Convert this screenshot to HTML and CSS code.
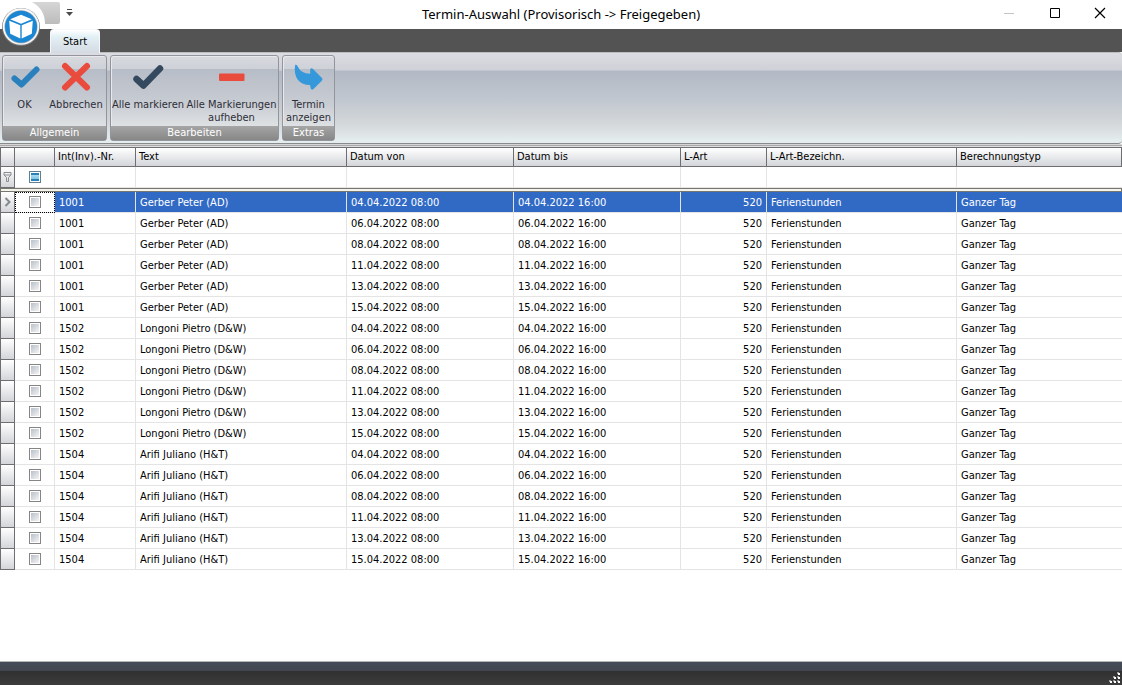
FILE: index.html
```html
<!DOCTYPE html>
<html lang="de">
<head>
<meta charset="utf-8">
<title>Termin-Auswahl</title>
<link rel="stylesheet" href="styles.css">
</head>
<body>
<div class="window">
  <header class="titlebar">
    <div class="quick-access">
      <svg class="quick-shape" width="34" height="26" viewBox="0 0 34 26" aria-hidden="true"><defs><linearGradient id="quick" x1="0" y1="0" x2="0" y2="1"><stop offset="0" stop-color="#d6d6d6"/><stop offset="1" stop-color="#bcbcbc"/></linearGradient></defs><path d="M6 2H32Q34 2 34 4V22Q34 24 32 24H19Q19 9 6 2Z" fill="url(#quick)"/></svg>
      <button class="quick-menu" type="button" aria-label="Schnellzugriff anpassen"><svg width="7" height="7" viewBox="0 0 7 7"><path d="M1 0H6V1H1ZM0 3H7L3.5 7Z" fill="#4a4a4a"/></svg></button>
    </div>
    <h1 class="title">Termin-Auswahl (Provisorisch -&gt; Freigegeben)</h1>
    <div class="window-controls">
      <button type="button" aria-label="Minimieren" disabled><svg width="12" height="12" viewBox="0 0 12 12"><path d="M1 6.5H11" stroke="#c4c4c4"/></svg></button>
      <button type="button" aria-label="Maximieren"><svg width="12" height="12" viewBox="0 0 12 12"><path d="M1.5 1.5H10.500V10.500H1.500Z" fill="none" stroke="#000"/></svg></button>
      <button type="button" aria-label="Schliessen"><svg width="12" height="12" viewBox="0 0 12 12"><path d="M1 1L11 11M11 1L1 11" stroke="#000" stroke-width="1.200"/></svg></button>
    </div>
  </header>
  <button class="orb" type="button" aria-label="Anwendungsmenü">
    <svg width="42" height="42" viewBox="0 0 42 42">
      <circle cx="21" cy="21" r="19" fill="#777"/>
      <circle cx="21" cy="20.500" r="18.300" fill="#fafafa"/>
      <circle cx="21" cy="20.800" r="16.600" fill="#b5b8ba"/>
      <circle cx="21" cy="20.800" r="16" fill="#1b87d3"/>
      <path d="M21 8.800L31.800 13.200L21 17.800L10.200 13.200ZM9.200 14.800L20.300 19.300V32.500L10.200 27.800ZM32.800 14.800L21.700 19.300V32.500L31.800 27.800Z" fill="#fff"/>
    </svg>
  </button>
  <nav class="tabs" role="tablist">
    <button class="tab" type="button" role="tab" aria-selected="true">Start</button>
  </nav>
  <section class="ribbon">
    <div class="group">
      <div class="group-items">
        <button class="tool tool-ok" type="button"><svg width="32" height="32" viewBox="0 0 32 32"><path d="M5.500 18.500L12.500 24.500L27.500 9.500" fill="none" stroke="#2980bd" stroke-width="6" stroke-linecap="round" stroke-linejoin="round"/></svg>OK</button>
        <button class="tool tool-cancel" type="button"><svg width="32" height="32" viewBox="0 0 32 32"><path d="M5 6L27 27.500M27 6L5 27.500" stroke="#e94b3c" stroke-width="6" stroke-linecap="round"/></svg>Abbrechen</button>
      </div>
      <div class="group-caption">Allgemein</div>
    </div>
    <div class="group">
      <div class="group-items">
        <button class="tool tool-mark" type="button"><svg width="32" height="32" viewBox="0 0 32 32"><path d="M4.500 19L11.500 25.500L28 8.500" fill="none" stroke="#34495e" stroke-width="6.500" stroke-linecap="round" stroke-linejoin="round"/></svg>Alle markieren</button>
        <button class="tool tool-unmark" type="button"><svg width="32" height="32" viewBox="0 0 32 32"><rect x="3" y="13.500" width="25.500" height="7.500" rx="1" fill="#e94b3c"/></svg>Alle Markierungen<br>aufheben</button>
      </div>
      <div class="group-caption">Bearbeiten</div>
    </div>
    <div class="group">
      <div class="group-items">
        <button class="tool tool-show" type="button"><svg width="32" height="32" viewBox="0 0 32 32"><path d="M2.200 4.800Q3.800 4 5 7Q8 13.500 17.200 13.800V9.500Q18 7.500 20 9L29 18Q30 19.200 29 20.400L20.500 29Q18.500 30.500 17.800 28.500L17 25Q9 25 5 20Q.5 14 2.200 4.800Z" fill="#3498db"/></svg>Termin<br>anzeigen</button>
      </div>
      <div class="group-caption">Extras</div>
    </div>
  </section>
  <main class="content">
    <table class="grid">
      <colgroup><col class="c-ind"><col class="c-check"><col class="c-nr"><col class="c-text"><col class="c-date"><col class="c-date"><col class="c-art"><col class="c-name"><col></colgroup>
      <thead>
        <tr><th></th><th></th><th>Int(Inv).-Nr.</th><th>Text</th><th>Datum von</th><th>Datum bis</th><th>L-Art</th><th>L-Art-Bezeichn.</th><th>Berechnungstyp</th></tr>
        <tr class="filter"><td class="ind"><svg width="9" height="10" viewBox="0 0 9 10"><path d="M1 .5H8V3L5.500 5.500V9.500H3.500V5.500L1 3ZM1 3H8" fill="none" stroke="#8b8d90"/></svg></td><td class="check"><input class="box mixed" type="checkbox" aria-label="Alle Zeilen filtern"></td><td></td><td></td><td></td><td></td><td></td><td></td><td></td></tr>
        <tr class="divider"><td colspan="9"></td></tr>
      </thead>
      <tbody id="rows"></tbody>
    </table>
  </main>
  <footer class="statusbar">
    <svg width="12" height="12" viewBox="0 0 12 12" aria-hidden="true"><path d="M8 0h2v2h-2zM4 4h2v2h-2zM8 4h2v2h-2zM0 8h2v2h-2zM4 8h2v2h-2zM8 8h2v2h-2z" fill="#999"/><path d="M9 1h2v2h-2zM5 5h2v2h-2zM9 5h2v2h-2zM1 9h2v2h-2zM5 9h2v2h-2zM9 9h2v2h-2z" fill="#fff"/></svg>
  </footer>
</div>
<script src="rows.js"></script>
</body>
</html>
```

FILE: styles.css
```css
* { box-sizing: border-box; }
body { margin: 0; font-family: Tahoma, "DejaVu Sans Condensed", sans-serif; font-size: 11px; color: #000; background: #fff; }
button { font: inherit; color: inherit; margin: 0; padding: 0; border: 0; background: none; }
svg { display: block; flex: none; }
.window { position: relative; display: flex; flex-direction: column; min-height: 100vh; }

.titlebar { display: grid; grid-template-columns: 1fr auto 1fr; height: 29px; background: #fff; }
.quick-access { display: flex; align-items: flex-start; gap: 6px; padding-left: 26px; }
.quick-menu { padding-top: 9px; }
.title { margin: 0; font: 400 13px/28px "Segoe UI", "Noto Sans", sans-serif; }
.window-controls { display: flex; justify-content: flex-end; }
.window-controls button { display: grid; place-items: center; width: 46px; height: 26px; }
.orb { position: absolute; left: 0; top: 6px; z-index: 2; }
.window-controls button:last-child { width: 44px; }

.tabs { display: flex; height: 23px; padding-left: 50px; background: #535353; }
.tab { width: 50px; height: 24px; border: 1px solid #f4f8fa; border-bottom: 0; border-radius: 4px 4px 0 0; background: linear-gradient(#fff, #e2f0f5 30%, #d5dae2); z-index: 1; }

.ribbon { display: flex; gap: 3px; height: 92px; padding: 2px 2px 3px; border-top: 1px solid #bdbdbd; border-bottom: 1px solid #878b8b; border-radius: 0 4px 4px 0; background: linear-gradient(#dcdde2, #cfd1d8 19%, #b3b9c4 20%, #c0c6cf 50%, #d3d7d9 78%, #e5edee 98%); }
.group { display: flex; flex-direction: column; height: 86px; border: 1px solid #92969c; border-radius: 3px; box-shadow: inset 1px 1px #e7e9ed; background: linear-gradient(#d8dadf, #ced1d8 15%, #b7bdc7 16%, #c7cbd2 55%, #dfe2e4 84%); }
.group-items { display: flex; flex: 1; }
.group-caption { height: 14px; line-height: 14px; text-align: center; color: #fff; background: linear-gradient(#a5a5a5, #878787); }
.tool { display: flex; flex-direction: column; align-items: center; padding-top: 4px; line-height: 13px; white-space: nowrap; color: #2e2e38; }
.tool svg { margin-bottom: 6px; }
.tool-ok { width: 43px; }
.tool-cancel { width: 60px; }
.tool-mark { width: 74px; }
.tool-unmark { width: 93px; }
.tool-show { width: 51px; }

.content { flex: 1; padding-top: 3px; background: linear-gradient(#d5d5d5 1px, #a9a9a9 1px, #a9a9a9 2px, #dedede 2px, #dedede 3px, #fff 3px); }
.grid { width: 100%; table-layout: fixed; border-collapse: separate; border-spacing: 0; }
.c-ind { width: 15px; }
.c-check { width: 40px; }
.c-nr { width: 81px; }
.c-text { width: 211px; }
.c-date { width: 167px; }
.c-art { width: 86px; }
.c-name { width: 190px; }
.grid th { height: 20px; padding: 0 3px 2px; text-align: left; font-weight: 400; border: 1px solid #6e6e72; border-left: 0; background: linear-gradient(#fff, #e9eaec 50%, #d4d5d9); }
.grid th:first-child { border-left: 1px solid #6e6e72; }
.grid td { height: 21px; padding: 0 4px; white-space: nowrap; border-right: 1px solid #e4e4e4; border-bottom: 1px solid #e4e4e4; }
.grid td:last-child { border-right: 0; }
.grid td.ind { padding: 0 0 0 2px; border: 1px solid #6e6e72; border-top: 0; background: linear-gradient(#fff, #e9eaec 50%, #d4d5d9); }
.grid td.num { text-align: right; }
.grid td.check { padding: 0; line-height: 0; text-align: center; }
.grid .divider td { height: 4px; padding: 0; border: 1px solid #77776f; background: #f4f4ee; }
.grid .selected td { color: #fff; background: #316ac5; }
.grid .selected td.ind { background: linear-gradient(#fff, #d4d5d9); }
.grid .selected td.check { background: #fff; outline: 1px dotted #000; outline-offset: -1px; }
.box { appearance: none; width: 12px; height: 12px; margin: 0; padding: 1px; border: 1px solid #858585; background: linear-gradient(135deg, #b9c0ca, #f4f4f4) content-box #f8f8f8; vertical-align: middle; }
.box.mixed { border-color: #5f7f93; background: linear-gradient(#2a80b5 2px, #a9dcf3 2px, #7cc4e6 6px, #2a80b5 6px) content-box #d5eef8; }

.statusbar { display: flex; justify-content: flex-end; align-items: flex-end; height: 24px; padding: 0 1px 1px 0; border-top: 1px solid #b5b5b5; background: linear-gradient(#464c57, #414650 9px, #303030 9px, #3c3c3c); }
```

FILE: rows.js
```js
const people = [
  ["1001", "Gerber Peter (AD)"],
  ["1502", "Longoni Pietro (D&W)"],
  ["1504", "Arifi Juliano (H&T)"]
];
const days = ["04", "06", "08", "11", "13", "15"];
const body = document.getElementById("rows");

for (const [number, name] of people) {
  for (const day of days) {
    const row = body.insertRow();
    const values = [number, name, `${day}.04.2022 08:00`, `${day}.04.2022 16:00`, "520", "Ferienstunden", "Ganzer Tag"];
    const indicator = row.insertCell();
    indicator.className = "ind";
    const check = row.insertCell();
    check.className = "check";
    const box = document.createElement("input");
    box.type = "checkbox";
    box.className = "box";
    box.setAttribute("aria-label", `${name} ${values[2]}`);
    check.append(box);
    values.forEach((value, index) => {
      const cell = row.insertCell();
      cell.textContent = value;
      if (index === 4) cell.className = "num";
    });
  }
}
body.rows[0].className = "selected";
body.rows[0].cells[0].innerHTML = '<svg width="9" height="10" viewBox="0 0 9 10"><path d="M2.500 1L6.500 5L2.500 9" fill="none" stroke="#85888c" stroke-width="2"/></svg>';
```
